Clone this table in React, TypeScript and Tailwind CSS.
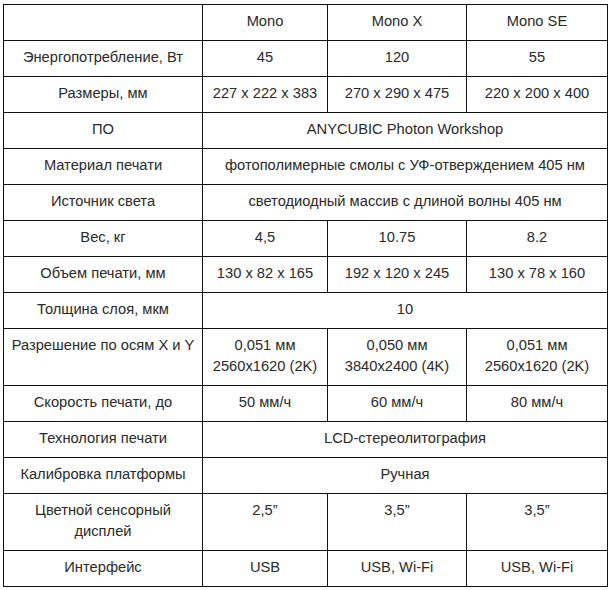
type Row = {
  label: React.ReactNode;
  values: React.ReactNode[];
};

const rows: Row[] = [
  { label: 'Энергопотребление, Вт', values: ['45', '120', '55'] },
  { label: 'Размеры, мм', values: ['227 x 222 x 383', '270 x 290 x 475', '220 x 200 x 400'] },
  { label: 'ПО', values: ['ANYCUBIC Photon Workshop'] },
  { label: 'Материал печати', values: ['фотополимерные смолы с УФ-отверждением 405 нм'] },
  { label: 'Источник света', values: ['светодиодный массив с длиной волны 405 нм'] },
  { label: 'Вес, кг', values: ['4,5', '10.75', '8.2'] },
  { label: 'Объем печати, мм', values: ['130 x 82 x 165', '192 x 120 x 245', '130 x 78 x 160'] },
  { label: 'Толщина слоя, мкм', values: ['10'] },
  {
    label: 'Разрешение по осям X и Y',
    values: [
      <>0,051 мм<br />2560x1620 (2K)</>,
      <>0,050 мм<br />3840x2400 (4K)</>,
      <>0,051 мм<br />2560x1620 (2K)</>,
    ],
  },
  { label: 'Скорость печати, до', values: ['50 мм/ч', '60 мм/ч', '80 мм/ч'] },
  { label: 'Технология печати', values: ['LCD-стереолитография'] },
  { label: 'Калибровка платформы', values: ['Ручная'] },
  {
    label: <>Цветной сенсорный<br />дисплей</>,
    values: ['2,5”', '3,5”', '3,5”'],
  },
  { label: 'Интерфейс', values: ['USB', 'USB, Wi-Fi', 'USB, Wi-Fi'] },
];

const cell =
  'border border-[#111] px-1 pt-[6px] pb-[8px] text-center align-top leading-[21px] whitespace-nowrap';

export default function App() {
  return (
    <div className="min-h-screen bg-white pl-[3px] pt-[4px] font-['Liberation_Sans',Arial,sans-serif] text-[14.7px] text-[#2a2a2a]">
      <table className="w-[604px] table-fixed border-collapse">
        <colgroup>
          <col className="w-[199px]" />
          <col className="w-[125px]" />
          <col className="w-[139px]" />
          <col className="w-[141px]" />
        </colgroup>
        <tbody>
          <tr>
            <td className={cell}></td>
            <td className={cell}>Mono</td>
            <td className={cell}>Mono X</td>
            <td className={cell}>Mono SE</td>
          </tr>
          {rows.map((row, i) => (
            <tr key={i}>
              <td className={cell}>{row.label}</td>
              {row.values.length === 1 ? (
                <td className={cell} colSpan={3}>
                  {row.values[0]}
                </td>
              ) : (
                row.values.map((v, j) => (
                  <td key={j} className={cell}>
                    {v}
                  </td>
                ))
              )}
            </tr>
          ))}
        </tbody>
      </table>
    </div>
  );
}
